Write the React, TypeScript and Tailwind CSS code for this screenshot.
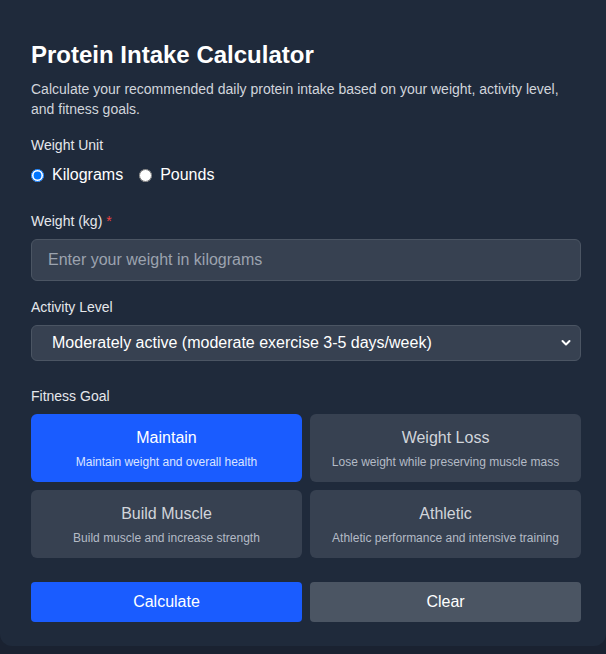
import { useState } from "react";

const goals = [
  { id: "maintain", title: "Maintain", desc: "Maintain weight and overall health" },
  { id: "loss", title: "Weight Loss", desc: "Lose weight while preserving muscle mass" },
  { id: "muscle", title: "Build Muscle", desc: "Build muscle and increase strength" },
  { id: "athletic", title: "Athletic", desc: "Athletic performance and intensive training" },
];

export default function App() {
  const [unit, setUnit] = useState("kg");
  const [goal, setGoal] = useState("maintain");

  return (
    <div className="min-h-screen bg-[#1a2231] font-['Liberation_Sans',Arial,sans-serif]">
      <div className="bg-[#1f2a3b] rounded-b-xl pl-[31px] pr-[25px] pt-[39px] pb-6">
        <h1 className="text-white text-2xl font-bold leading-8">Protein Intake Calculator</h1>
        <p className="mt-2 text-[#d1d5db] text-sm leading-5">
          Calculate your recommended daily protein intake based on your weight, activity level, and fitness goals.
        </p>

        <div className="mt-4">
          <div className="text-[#e5e7eb] text-sm leading-5 mb-2">Weight Unit</div>
          <div className="flex items-center gap-4 h-6">
            <label className="flex items-center gap-2 text-white text-base">
              <input
                type="radio"
                name="unit"
                checked={unit === "kg"}
                onChange={() => setUnit("kg")}
                className="w-[13px] h-[13px] m-0"
              />
              Kilograms
            </label>
            <label className="flex items-center gap-2 text-white text-base">
              <input
                type="radio"
                name="unit"
                checked={unit === "lb"}
                onChange={() => setUnit("lb")}
                className="w-[13px] h-[13px] m-0"
              />
              Pounds
            </label>
          </div>
        </div>

        <div className="mt-6">
          <div className="text-[#e5e7eb] text-sm leading-5 mb-2">
            Weight (kg) <span className="text-[#ef4444]">*</span>
          </div>
          <input
            type="text"
            placeholder="Enter your weight in kilograms"
            className="w-full h-[42px] px-4 rounded-md bg-[#374151] border border-[#4b5563] text-white text-base placeholder:text-[#9ca3af] outline-none"
          />
        </div>

        <div className="mt-4">
          <div className="text-[#e5e7eb] text-sm leading-5 mb-2">Activity Level</div>
          <div className="relative">
            <select className="w-full h-9 pl-5 pr-8 appearance-none rounded-md bg-[#374151] border border-[#4b5563] text-white text-base outline-none" defaultValue="moderate">
              <option value="sedentary">Sedentary (little or no exercise)</option>
              <option value="light">Lightly active (light exercise 1-3 days/week)</option>
              <option value="moderate">Moderately active (moderate exercise 3-5 days/week)</option>
              <option value="very">Very active (hard exercise 6-7 days/week)</option>
            </select>
            <svg
              className="absolute right-[10px] top-1/2 -translate-y-1/2 pointer-events-none"
              width="10"
              height="7"
              viewBox="0 0 10 7"
              fill="none"
            >
              <path d="M1.5 1.5 L5 5 L8.5 1.5" stroke="white" strokeWidth="2" strokeLinecap="round" strokeLinejoin="round" />
            </svg>
          </div>
        </div>

        <div className="mt-[25px]">
          <div className="text-[#e5e7eb] text-sm leading-5 mb-2">Fitness Goal</div>
          <div className="grid grid-cols-2 gap-2">
            {goals.map((g) => {
              const active = goal === g.id;
              return (
                <button
                  key={g.id}
                  onClick={() => setGoal(g.id)}
                  className={
                    active
                      ? "rounded-md bg-[#1a5cff] py-3 px-2 text-center"
                      : "rounded-md bg-[#374151] py-3 px-2 text-center"
                  }
                >
                  <div className={active ? "text-white text-base leading-6" : "text-[#d1d5db] text-base leading-6"}>
                    {g.title}
                  </div>
                  <div className={active ? "mt-1 text-[#dbe4ff] text-xs leading-4" : "mt-1 text-[#b4bbc6] text-xs leading-4"}>
                    {g.desc}
                  </div>
                </button>
              );
            })}
          </div>
        </div>

        <div className="mt-6 grid grid-cols-2 gap-2">
          <button className="h-10 rounded bg-[#1a5cff] text-white text-base">Calculate</button>
          <button className="h-10 rounded bg-[#4b5563] text-white text-base">Clear</button>
        </div>
      </div>
    </div>
  );
}
